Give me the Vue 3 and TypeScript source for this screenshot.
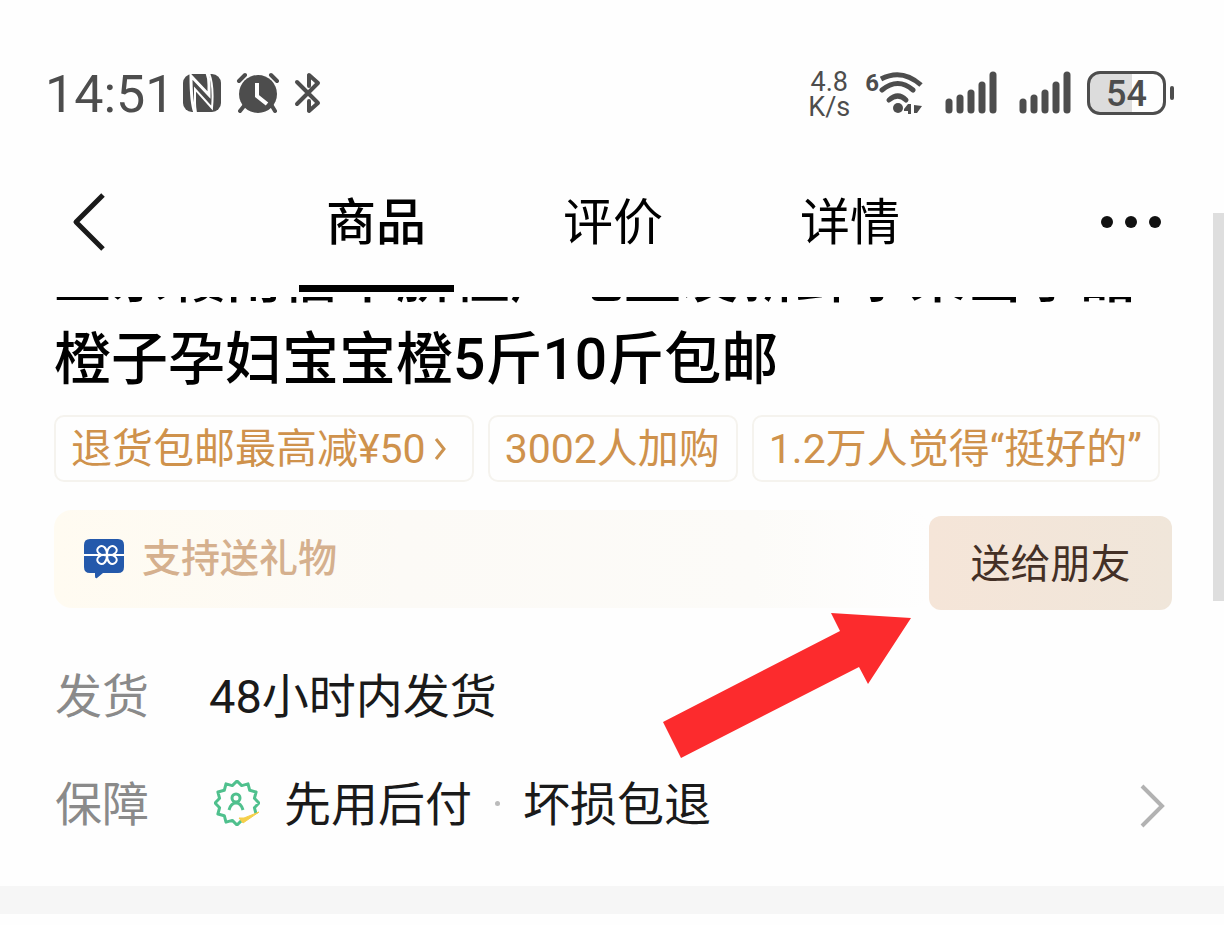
<script setup lang="ts">
import { ref } from 'vue'

const tabs: string[] = ['商品', '评价', '详情']
const active = ref(0)

const bars: { x: number; top: number }[] = [
  { x: 4, top: 31 },
  { x: 15, top: 27 },
  { x: 26, top: 22 },
  { x: 37, top: 14 },
  { x: 48, top: 4 },
]

function sealPath(cx: number, cy: number, outer: number, inner: number, points: number): string {
  const parts: string[] = []
  for (let i = 1; i < points * 2 - 1; i++) {
    const angle = Math.PI / 4 + (i * Math.PI) / points + Math.PI / 12
    const r = i % 2 ? inner : outer
    parts.push(`${(cx + r * Math.cos(angle)).toFixed(1)} ${(cy + r * Math.sin(angle)).toFixed(1)}`)
  }
  return `M${parts.join('L')}`
}

const seal = sealPath(23, 23, 22, 18, 12)
</script>

<template>
  <div class="page">
    <header class="status">
      <div class="status-side">
        <time class="clock">14:51</time>
        <svg class="nfc" width="38" height="40" viewBox="0 0 38 40" aria-label="NFC">
          <rect x="0" y="1" width="38" height="38" rx="9" fill="#4d4d4d" />
          <g fill="none" stroke="#fff" stroke-width="3">
            <path d="M12 40C8 30 8 14 8 3L26 22V12Q26 5 24 0" />
            <path d="M13 40Q12 34 12 30V16L29 35C30 24 30 10 26 0" stroke-width="2" />
          </g>
        </svg>
        <svg class="alarm" width="44" height="42" viewBox="0 0 44 42" aria-label="闹钟">
          <circle cx="22" cy="22" r="19" fill="#4d4d4d" />
          <g fill="none" stroke="#4d4d4d" stroke-width="4" stroke-linecap="round">
            <path d="M3 9L9 3M35 3L41 9M8 34L4 39M36 34L39 39" />
          </g>
          <path d="M21 11V24L31 32" fill="none" stroke="#fff" stroke-width="4" />
        </svg>
        <svg class="bluetooth" width="28" height="42" viewBox="0 0 28 42" aria-label="蓝牙">
          <path d="M3 10L24 31L15 39V29M3 32L24 11L15 3V14" fill="none" stroke="#4d4d4d" stroke-width="4" stroke-linecap="round" stroke-linejoin="round" />
        </svg>
      </div>
      <div class="status-side">
        <div class="speed"><span>4.8</span><span>K/s</span></div>
        <div class="wifi">
          <span class="wifi-gen">6</span>
          <svg width="46" height="44" viewBox="0 0 46 44" aria-label="无线网络">
            <g fill="none" stroke="#4d4d4d" stroke-width="5">
              <path d="M2 8Q23 -3 42 14" />
              <path d="M3 19Q19 6 34 19" stroke-linecap="round" />
              <path d="M10 29Q19 21 27 29" stroke-linecap="round" />
            </g>
            <circle cx="19" cy="37" r="5" fill="#4d4d4d" />
            <path d="M29 33H32V43H29V40H25V38ZM35 34L43 35L38 42H35Z" fill="#4d4d4d" />
          </svg>
        </div>
        <svg v-for="n in 2" :key="n" class="signal" width="52" height="44" viewBox="0 0 52 44" aria-label="信号">
          <path v-for="b in bars" :key="b.x" :d="`M${b.x} ${b.top}V39`" stroke="#4d4d4d" stroke-width="7" stroke-linecap="round" />
        </svg>
        <div class="battery"><span class="battery-level">54</span></div>
        <i class="battery-cap"></i>
      </div>
    </header>

    <nav class="topbar">
      <button class="icon-button" type="button" aria-label="返回">
        <svg width="34" height="58" viewBox="0 0 34 58"><path d="M31 2L4 29L31 56" fill="none" stroke="#1a1a1a" stroke-width="5" stroke-linejoin="round" /></svg>
      </button>
      <div class="tabs">
        <button
          v-for="(tab, i) in tabs"
          :key="tab"
          type="button"
          class="tab"
          :class="{ active: active === i }"
          @click="active = i"
        >{{ tab }}</button>
      </div>
      <button class="icon-button" type="button" aria-label="更多">
        <svg width="62" height="14" viewBox="0 0 62 14" fill="#111"><circle cx="7" cy="7" r="6" /><circle cx="31" cy="7" r="6" /><circle cx="55" cy="7" r="6" /></svg>
      </button>
    </nav>

    <main>
      <div class="title-clip">
        <h1 class="title">正宗赣南信丰脐橙产地直发新鲜水果当季甜<br />橙子孕妇宝宝橙5斤10斤包邮</h1>
      </div>

      <div class="chips">
        <button class="chip" type="button">
          退货包邮最高减¥50
          <svg class="chip-arrow" width="14" height="26" viewBox="0 0 14 26"><path d="M2 3L10 13L2 23" fill="none" stroke="#cc9350" stroke-width="3" /></svg>
        </button>
        <span class="chip">3002人加购</span>
        <span class="chip">1.2万人觉得“挺好的”</span>
      </div>

      <section class="gift">
        <div class="gift-info">
          <svg width="40" height="40" viewBox="0 0 40 40" aria-hidden="true">
            <path d="M6 0H34Q40 0 40 6V28Q40 34 34 34H19L13 39Q11 40 11 37V34H6Q0 34 0 28V6Q0 0 6 0Z" fill="#2459ab" />
            <g fill="none" stroke="#fff" stroke-width="2">
              <path d="M0 16H40" />
              <path fill="#2459ab" d="M23 16C14 17 11 11 15 8C19 5 23 9 23 16C23 9 27 5 31 8C35 11 32 17 23 16C32 15 35 21 31 24C27 27 23 23 23 16C23 23 19 27 15 24C11 21 14 15 23 16Z" />
            </g>
          </svg>
          <span class="gift-text">支持送礼物</span>
        </div>
        <button class="send" type="button">送给朋友</button>
        <svg class="arrow" width="250" height="146" viewBox="0 0 250 146" aria-hidden="true">
          <path d="M249 5L169 0L178 18L1 109L19 145L197 54L206 71Z" fill="#fc2b2d" />
        </svg>
      </section>

      <dl class="details">
        <div class="row">
          <dt>发货</dt>
          <dd>48小时内发货</dd>
        </div>
        <div class="row">
          <dt>保障</dt>
          <dd>
            <svg class="seal" width="46" height="46" viewBox="0 0 46 46" aria-hidden="true">
              <path :d="seal" fill="none" stroke="#4fc08d" stroke-width="3" stroke-linejoin="round" />
              <circle cx="22" cy="18" r="4" fill="none" stroke="#4fc08d" stroke-width="3" />
              <path d="M15 30Q17 23 22 23Q27 23 29 30" fill="none" stroke="#4fc08d" stroke-width="3" />
              <path d="M25 38L29 43L45 32L30 38Z" fill="#f5cf4a" stroke="#f5cf4a" stroke-width="1" />
            </svg>
            先用后付<i class="dot"></i>坏损包退
          </dd>
          <button class="icon-button go" type="button" aria-label="查看保障">
            <svg width="26" height="46" viewBox="0 0 26 46"><path d="M2 3L22 23L2 43" fill="none" stroke="#b2b2b2" stroke-width="4" /></svg>
          </button>
        </div>
      </dl>
      <div class="divider"></div>
    </main>
    <div class="scrollbar"></div>
  </div>
</template>

<style>
body {
  margin: 0;
  background: #fefefe;
}
</style>

<style scoped>
.page {
  position: relative;
  min-height: 100vh;
  overflow: hidden;
  background: #fefefe;
  color: #1a1a1a;
  font-family: Roboto, "Noto Sans CJK SC", sans-serif;
}
button {
  padding: 0;
  border: 0;
  background: none;
  color: inherit;
  font: inherit;
}
svg {
  display: block;
  flex: none;
}
.status {
  display: flex;
  justify-content: space-between;
  padding: 71px 50px 35px 45px;
  color: #4d4d4d;
}
.status-side {
  display: flex;
  align-items: center;
  height: 44px;
}
.clock {
  padding-top: 4px;
  font-size: 52px;
  line-height: 44px;
}
.nfc {
  margin-left: 8px;
}
.alarm {
  margin-left: 15px;
}
.bluetooth {
  margin-left: 14px;
}
.speed {
  display: flex;
  flex-direction: column;
  align-items: center;
  padding-top: 4px;
  font-size: 27px;
  line-height: 25px;
}
.wifi {
  display: flex;
  margin-left: 15px;
}
.wifi-gen {
  font-size: 24px;
  font-weight: 700;
  line-height: 24px;
}
.signal {
  margin-left: 22px;
}
.wifi + .signal {
  margin-left: 20px;
}
.battery {
  box-sizing: border-box;
  width: 79px;
  height: 44px;
  margin-left: 16px;
  border: 3px solid #4d4d4d;
  border-radius: 13px;
  background: linear-gradient(90deg, #dcdcdc 58%, #fefefe 58%);
  text-align: center;
}
.battery-level {
  font-size: 36px;
  font-weight: 500;
  line-height: 40px;
}
.battery-cap {
  width: 4px;
  height: 14px;
  margin-left: 4px;
  border-radius: 2px;
  background: #4d4d4d;
}
.topbar {
  display: flex;
  height: 147px;
  padding: 0 62px 0 72px;
}
.icon-button {
  display: flex;
  align-items: center;
  height: 144px;
}
.tabs {
  display: flex;
  flex: 1;
  justify-content: center;
  gap: 82px;
  padding-left: 20px;
}
.tab {
  width: 155px;
  height: 142px;
  box-sizing: border-box;
  border-bottom: 7px solid transparent;
  font-size: 50px;
  color: #000;
}
.tab.active {
  border-bottom-color: #000;
  font-weight: 500;
}
.title-clip {
  overflow: hidden;
  padding: 0 54px;
}
.title {
  margin: -60px 0 0;
  color: #000;
  font-size: 57px;
  font-weight: 500;
  line-height: 82px;
  white-space: nowrap;
}
.chips {
  display: flex;
  gap: 14px;
  padding: 14px 54px 0;
}
.chip {
  display: flex;
  align-items: center;
  gap: 8px;
  box-sizing: border-box;
  height: 67px;
  padding: 0 16px 0 15px;
  border: 2px solid #f5f3ee;
  border-radius: 10px;
  color: #cf924c;
  font-size: 41px;
  line-height: 60px;
  white-space: nowrap;
}
.chip-arrow {
  margin-right: 8px;
}
.gift {
  position: relative;
  display: flex;
  align-items: flex-start;
  margin: 28px 52px 0 54px;
}
.gift-info {
  display: flex;
  flex: 1;
  align-items: center;
  gap: 18px;
  height: 98px;
  padding-left: 30px;
  border-radius: 18px;
  background: linear-gradient(90deg, #fffbf1, #fcfaf6 40%, #fcfbf8 80%, #fefefe);
  color: #d5b08e;
  font-size: 39px;
  font-weight: 500;
}
.gift-text {
  padding-bottom: 8px;
}
.send {
  width: 243px;
  height: 94px;
  margin-top: 6px;
  padding-bottom: 4px;
  border-radius: 12px;
  background: linear-gradient(90deg, #f5e5d8, #f0e6da);
  color: #443026;
  font-size: 40px;
}
.arrow {
  position: absolute;
  top: 103px;
  right: 260px;
}
.details {
  margin: 0;
  padding: 28px 58px 32px 55px;
}
.row {
  display: flex;
  align-items: center;
  height: 108px;
  font-size: 47px;
}
dt {
  width: 154px;
  color: #8a8a8a;
}
dd {
  display: flex;
  flex: 1;
  align-items: center;
  margin: 0;
}
.seal {
  margin: 6px 24px 0 5px;
}
.dot {
  width: 5px;
  height: 5px;
  margin: 6px 23px 0;
  border-radius: 50%;
  background: #bbb;
}
.go {
  height: 108px;
  padding-top: 12px;
  box-sizing: border-box;
}
.divider {
  height: 28px;
  background: #f6f6f6;
}
.scrollbar {
  position: absolute;
  top: 213px;
  right: 0;
  width: 11px;
  height: 388px;
  background: #dedede;
}
</style>
